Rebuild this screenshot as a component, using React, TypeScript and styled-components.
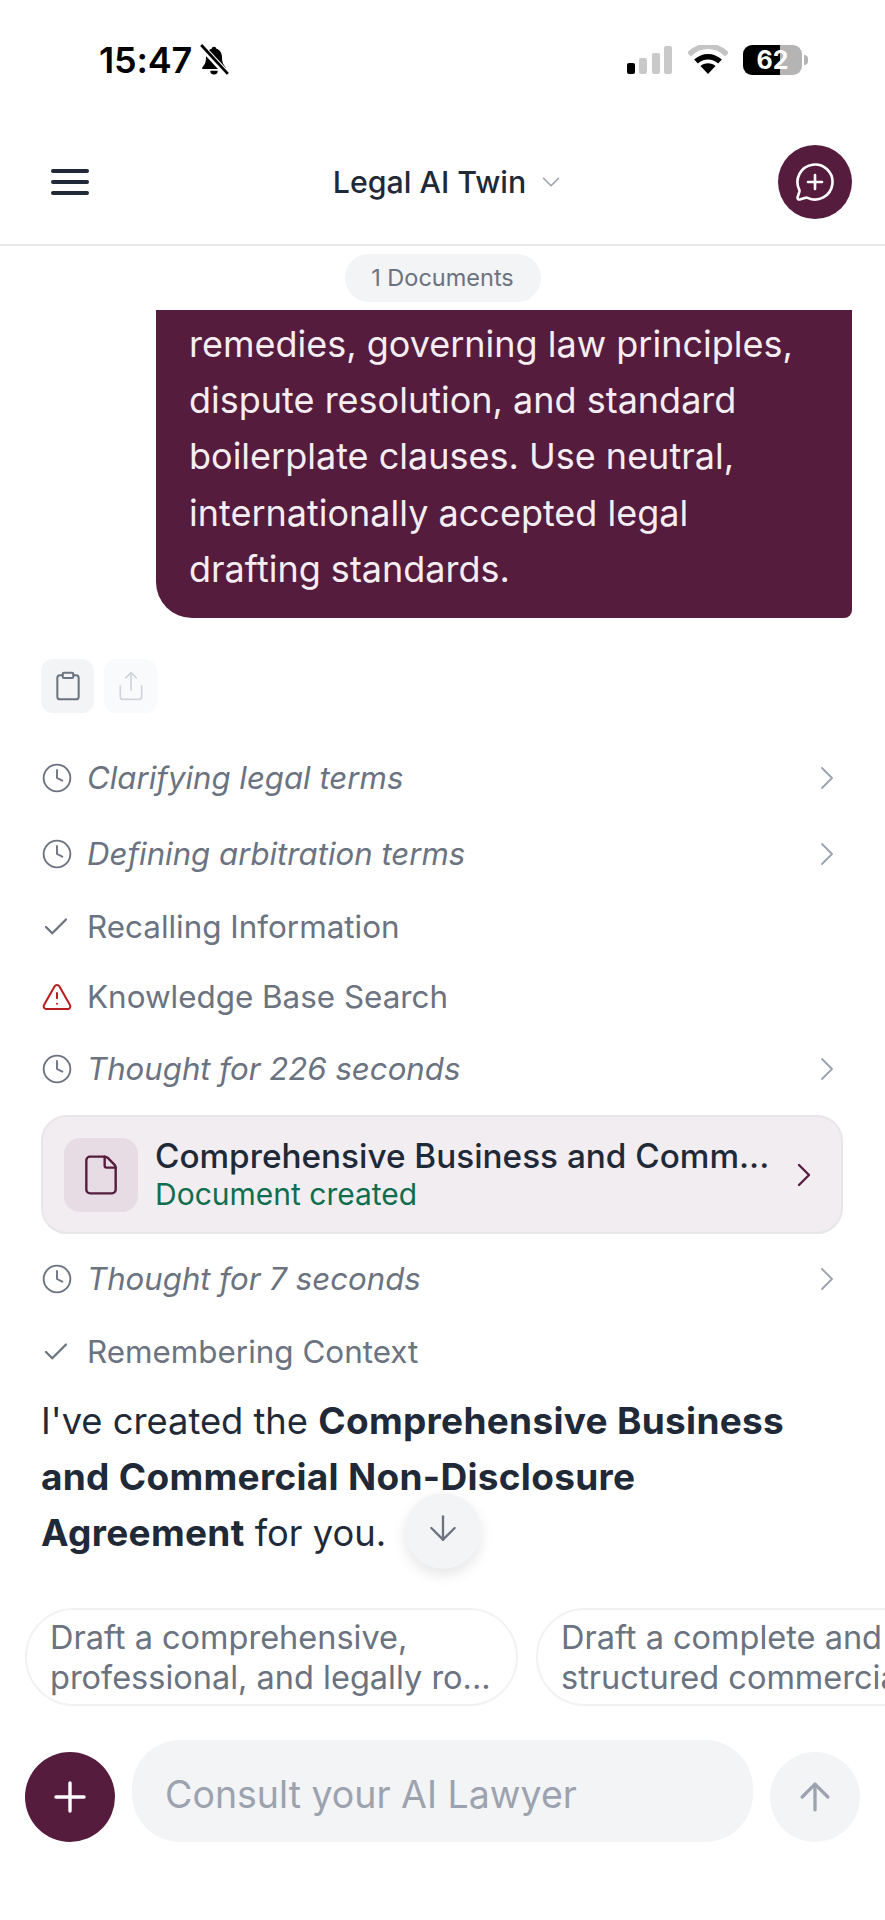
import * as React from 'react';
import styled, { createGlobalStyle } from 'styled-components';
import {
  ArrowDown,
  ArrowUp,
  Check,
  ChevronDown,
  ChevronRight,
  Clipboard,
  Clock,
  File,
  MessageCirclePlus,
  Plus,
  Share,
  TriangleAlert,
} from 'lucide-react';

const color = {
  plum: '#561c3e',
  ink: '#1f2937',
  grey: '#6b7280',
  light: '#f3f4f6',
  faint: '#9ca3af',
};

const GlobalStyle = createGlobalStyle`
  html, body {
    margin: 0;
    padding: 0;
    background: #fff;
  }
  * { box-sizing: border-box; }
`;

const Root = styled.div`
  position: relative;
  width: 885px;
  height: 1920px;
  overflow: hidden;
  background: #fff;
  font-family: Inter, "Liberation Sans", sans-serif;
  color: ${color.ink};
`;

const StatusBar = styled.div`
  display: flex;
  align-items: center;
  justify-content: space-between;
  height: 120px;
  padding: 0 83px 0 99px;
`;

const Clockface = styled.div`
  display: flex;
  align-items: center;
  gap: 6px;
  font-size: 36px;
  font-weight: 600;
  color: #000;
  letter-spacing: -0.2px;
`;

const StatusIcons = styled.div`
  display: flex;
  align-items: center;
  gap: 15px;
`;

const Battery = styled.div`
  position: relative;
  display: flex;
  align-items: center;
  justify-content: center;
  width: 59px;
  height: 30px;
  border-radius: 9px;
  background: linear-gradient(90deg, #000 0 63%, #b4b4b4 63% 100%);
  color: #fff;
  font-size: 25px;
  font-weight: 700;
  &::after {
    content: '';
    position: absolute;
    right: -6px;
    top: 10px;
    width: 4px;
    height: 10px;
    border-radius: 0 4px 4px 0;
    background: #b4b4b4;
  }
`;

const Header = styled.header`
  display: flex;
  align-items: center;
  justify-content: space-between;
  height: 126px;
  padding: 0 33px 0 51px;
  border-bottom: 2px solid #e7e8ea;
`;

const Burger = styled.div`
  display: flex;
  flex-direction: column;
  justify-content: space-between;
  width: 38px;
  height: 26px;
  span {
    height: 4px;
    border-radius: 2px;
    background: ${color.ink};
  }
`;

const Title = styled.div`
  display: flex;
  align-items: center;
  gap: 10px;
  margin-left: 32px;
  font-size: 30.300px;
  font-weight: 500;
  svg { color: ${color.faint}; }
`;

const RoundButton = styled.div<{ $size: number; $bg: string; $fg: string }>`
  display: flex;
  align-items: center;
  justify-content: center;
  flex: none;
  width: ${p => p.$size}px;
  height: ${p => p.$size}px;
  border-radius: 50%;
  background: ${p => p.$bg};
  color: ${p => p.$fg};
`;

const Pill = styled.div`
  width: 196px;
  height: 48px;
  margin: 8px auto;
  border-radius: 24px;
  background: ${color.light};
  color: ${color.grey};
  font-size: 23.500px;
  line-height: 48px;
  text-align: center;
`;

const Thread = styled.main`
  padding: 0 33px 0 41px;
`;

const Bubble = styled.div`
  margin-left: 115px;
  padding: 6px 30px 0 33px;
  height: 308px;
  border-radius: 0 0 8px 36px;
  background: ${color.plum};
  color: #f4eef2;
  font-size: 36px;
  line-height: 56.200px;
`;

const Actions = styled.div`
  display: flex;
  gap: 10px;
  margin: 41px 0 27px;
`;

const ActionButton = styled.div<{ $dim?: boolean }>`
  display: flex;
  align-items: center;
  justify-content: center;
  width: 53px;
  height: 54px;
  border-radius: 12px;
  background: ${p => (p.$dim ? '#f9fafb' : color.light)};
  color: ${p => (p.$dim ? '#d1d5db' : color.grey)};
`;

const Step = styled.div<{ $height: number }>`
  display: flex;
  align-items: center;
  height: ${p => p.$height}px;
  padding-right: 5px;
  color: ${color.grey};
`;

const StepIcon = styled.div`
  display: flex;
  align-items: center;
  width: 46px;
  flex: none;
`;

const StepLabel = styled.div<{ $italic?: boolean }>`
  flex: 1;
  font-size: ${p => (p.$italic ? '31.200px' : '31.400px')};
  font-style: ${p => (p.$italic ? 'italic' : 'normal')};
`;

const DocCard = styled.div`
  display: flex;
  align-items: center;
  height: 119px;
  margin: 8px 9px 7px 0;
  padding: 0 17px 0 21px;
  border: 2px solid #e9e6e9;
  border-radius: 26px;
  background: #f1edf1;
  color: ${color.plum};
`;

const DocIcon = styled.div`
  display: flex;
  align-items: center;
  justify-content: center;
  flex: none;
  width: 74px;
  height: 74px;
  margin-right: 17px;
  border-radius: 16px;
  background: #e7dce3;
`;

const DocText = styled.div`
  flex: 1;
  min-width: 0;
`;

const DocTitle = styled.div`
  color: ${color.ink};
  font-size: 33.300px;
  font-weight: 500;
  line-height: 38px;
  white-space: nowrap;
`;

const DocStatus = styled.div`
  color: #0f6e4e;
  font-size: 30px;
  line-height: 38px;
`;

const Reply = styled.p`
  margin: 7px 0 0;
  padding-right: 20px;
  font-size: 36.300px;
  line-height: 56px;
  b {
    font-size: 37px;
    font-weight: 700;
    letter-spacing: 0.3px;
  }
`;

const ScrollDown = styled.div`
  position: absolute;
  left: 405px;
  top: 1493px;
  display: flex;
  align-items: center;
  justify-content: center;
  width: 76px;
  height: 76px;
  border-radius: 50%;
  background: ${color.light};
  color: ${color.grey};
  box-shadow: 0 6px 14px rgba(0, 0, 0, 0.1);
  svg { margin-top: -6px; }
`;

const Suggestions = styled.div`
  display: flex;
  gap: 18px;
  margin-top: 47px;
  padding-left: 25px;
  overflow: hidden;
`;

const Chip = styled.div`
  flex: none;
  width: 493px;
  height: 98px;
  padding: 8px 23px;
  border: 2px solid #f1f2f4;
  border-radius: 49px;
  color: ${color.grey};
  font-size: 32.500px;
  line-height: 40px;
  white-space: pre;
`;

const Composer = styled.div`
  display: flex;
  align-items: flex-end;
  gap: 17px;
  margin-top: 34px;
  padding: 0 25px;
`;

const Field = styled.div`
  display: flex;
  align-items: center;
  flex: none;
  width: 621px;
  height: 102px;
  padding: 6px 0 0 33px;
  border-radius: 48px;
  background: ${color.light};
  color: ${color.faint};
  font-size: 37.500px;
`;

const BellOff = () => (
  <svg width="32" height="32" viewBox="0 0 30 30">
    <path
      d="M15 2.500c-1.200 0-2 .8-2.200 2C8.800 5.800 7.500 9 7.500 13c0 4-1 6.500-3.500 9v1.500h22V22c-2.500-2.500-3.500-5-3.500-9 0-4-1.300-7.200-5.300-8.500-.2-1.200-1-2-2.200-2z"
      fill="#000"
    />
    <path d="M11.500 25a3.500 3.500 0 0 0 7 0z" fill="#000" />
    <path d="M2 1l26 28" stroke="#fff" strokeWidth="6" />
    <path d="M3 1l25 27" stroke="#000" strokeWidth="2.600" />
  </svg>
);

const Signal = () => (
  <svg width="46" height="30" viewBox="0 0 46 30">
    <rect x="0" y="18" width="8" height="11" rx="2" fill="#000" />
    <rect x="12" y="13" width="8" height="16" rx="2" fill="#c9c9c9" />
    <rect x="25" y="8" width="8" height="21" rx="2" fill="#c9c9c9" />
    <rect x="37" y="1" width="8" height="28" rx="2" fill="#c9c9c9" />
  </svg>
);

const Wifi = () => (
  <svg width="40" height="30" viewBox="0 0 40 30">
    <path d="M1 9.500C12 -1.500 28 -1.500 39 9.500" fill="none" stroke="#c4c4c4" strokeWidth="5.500" />
    <path d="M8 16.500c7-6.500 17-6.500 24 0" fill="none" stroke="#000" strokeWidth="5.500" />
    <path d="M20 29l-7.500-8c4-3.800 11-3.800 15 0z" fill="#000" />
  </svg>
);

const steps = {
  clock: <Clock size={32} strokeWidth={1.4} />,
  check: <Check size={30} strokeWidth={1.8} />,
  alert: <TriangleAlert size={32} strokeWidth={1.5} color="#b91c1c" />,
};

const StepRow = ({
  icon,
  label,
  height,
  italic,
  more,
}: {
  icon: keyof typeof steps;
  label: string;
  height: number;
  italic?: boolean;
  more?: boolean;
}) => (
  <Step $height={height}>
    <StepIcon>{steps[icon]}</StepIcon>
    <StepLabel $italic={italic}>{label}</StepLabel>
    {more && <ChevronRight size={40} strokeWidth={1.1} color={color.faint} />}
  </Step>
);

const App = () => (
  <Root>
    <GlobalStyle />
    <StatusBar>
      <Clockface>
        15:47
        <BellOff />
      </Clockface>
      <StatusIcons>
        <Signal />
        <Wifi />
        <Battery>62</Battery>
      </StatusIcons>
    </StatusBar>
    <Header>
      <Burger>
        <span />
        <span />
        <span />
      </Burger>
      <Title>
        Legal AI Twin
        <ChevronDown size={30} strokeWidth={1.3} />
      </Title>
      <RoundButton $size={74} $bg={color.plum} $fg="#fff">
        <MessageCirclePlus size={42} strokeWidth={1.5} />
      </RoundButton>
    </Header>
    <Pill>1 Documents</Pill>
    <Thread>
      <Bubble>
        remedies, governing law principles,
        <br />
        dispute resolution, and standard
        <br />
        boilerplate clauses. Use neutral,
        <br />
        internationally accepted legal
        <br />
        drafting standards.
      </Bubble>
      <Actions>
        <ActionButton>
          <Clipboard size={32} strokeWidth={1.5} />
        </ActionButton>
        <ActionButton $dim>
          <Share size={32} strokeWidth={1.3} />
        </ActionButton>
      </Actions>
      <StepRow icon="clock" label="Clarifying legal terms" height={76} italic more />
      <StepRow icon="clock" label="Defining arbitration terms" height={76} italic more />
      <StepRow icon="check" label="Recalling Information" height={70} />
      <StepRow icon="alert" label="Knowledge Base Search" height={69} />
      <StepRow icon="clock" label="Thought for 226 seconds" height={76} italic more />
      <DocCard>
        <DocIcon>
          <File size={44} strokeWidth={1.3} />
        </DocIcon>
        <DocText>
          <DocTitle>Comprehensive Business and Comm...</DocTitle>
          <DocStatus>Document created</DocStatus>
        </DocText>
        <ChevronRight size={40} strokeWidth={1.4} />
      </DocCard>
      <StepRow icon="clock" label="Thought for 7 seconds" height={76} italic more />
      <StepRow icon="check" label="Remembering Context" height={69} />
      <Reply>
        I've created the <b>Comprehensive Business and Commercial Non-Disclosure Agreement</b> for
        you.
      </Reply>
    </Thread>
    <ScrollDown>
      <ArrowDown size={40} strokeWidth={1.4} />
    </ScrollDown>
    <Suggestions>
      <Chip>{'Draft a comprehensive,\nprofessional, and legally ro...'}</Chip>
      <Chip>{'Draft a complete and\nstructured commercial'}</Chip>
    </Suggestions>
    <Composer>
      <RoundButton $size={90} $bg={color.plum} $fg="#fff">
        <Plus size={48} strokeWidth={1.7} />
      </RoundButton>
      <Field>Consult your AI Lawyer</Field>
      <RoundButton $size={90} $bg={color.light} $fg={color.faint}>
        <ArrowUp size={44} strokeWidth={1.8} />
      </RoundButton>
    </Composer>
  </Root>
);

export default App;
